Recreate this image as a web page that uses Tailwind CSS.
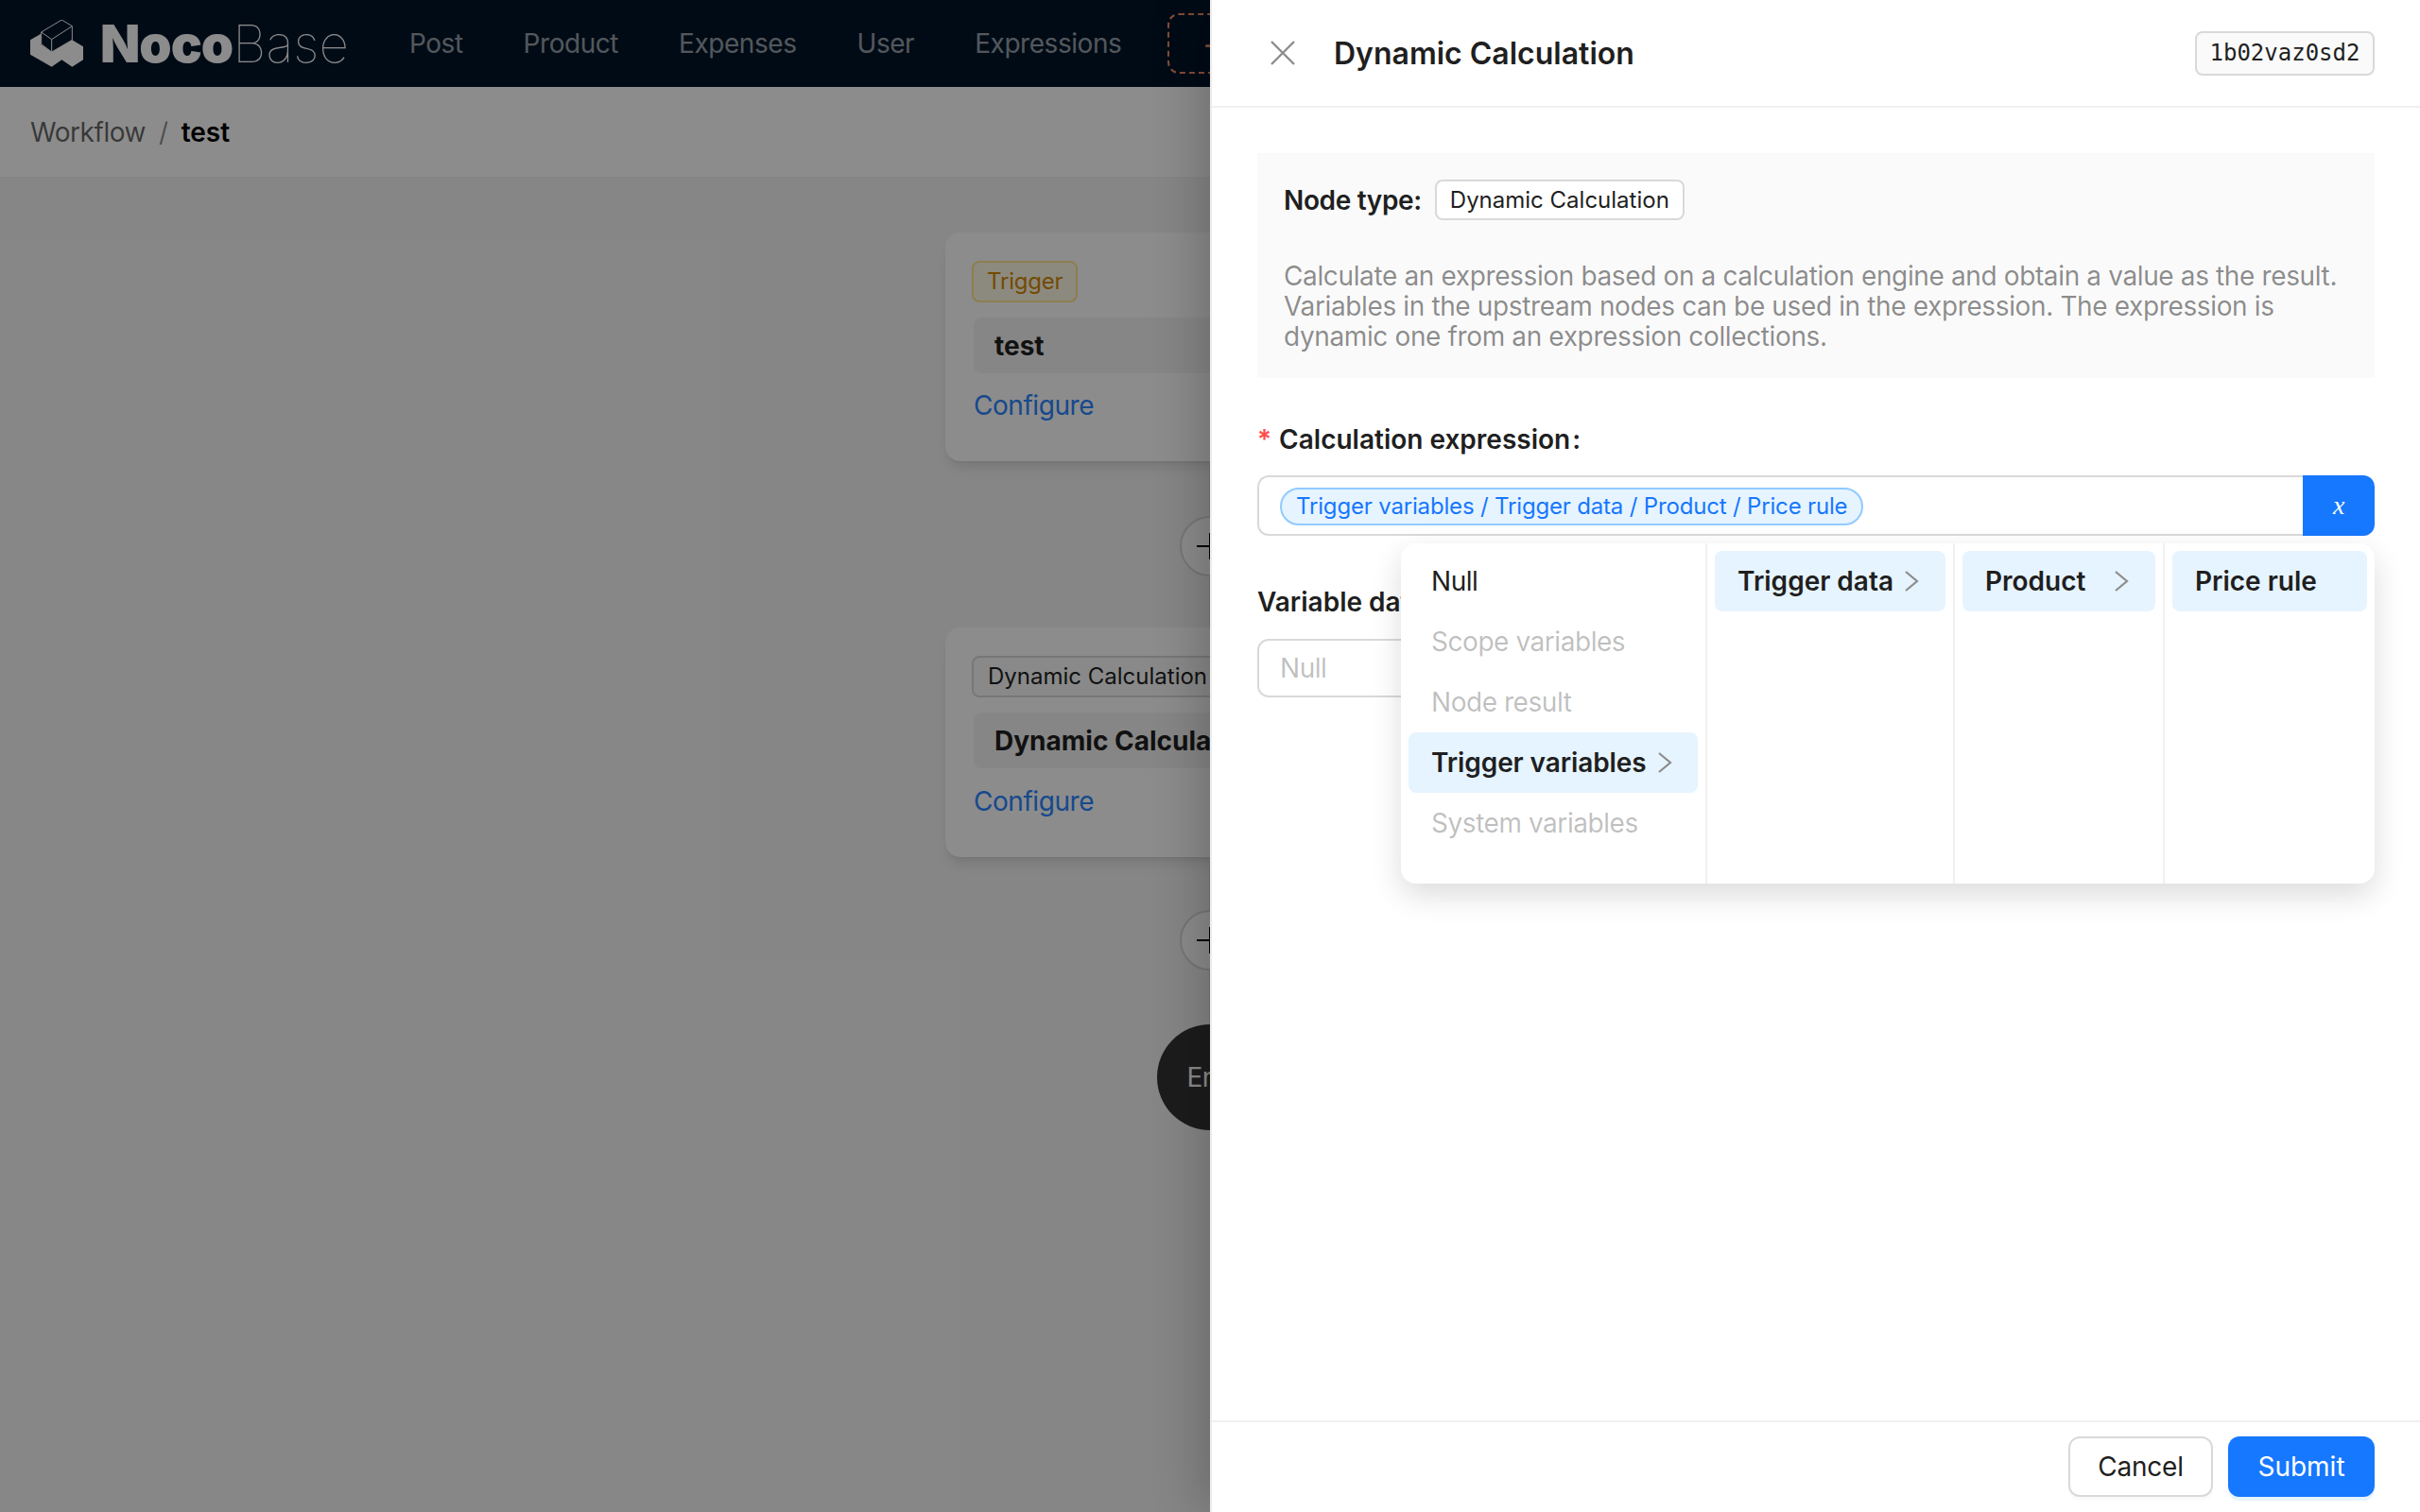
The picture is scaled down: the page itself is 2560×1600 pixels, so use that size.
<!DOCTYPE html>
<html lang="en">
<head>
    <meta charset="UTF-8">
    <title>Workflow - Dynamic Calculation</title>
    <script src="https://cdn.jsdelivr.net/npm/@tailwindcss/browser@4"></script>
</head>
<body class="font-['Inter',sans-serif] text-[28px] tracking-[-0.45px] text-[#1f1f1f]">
<div class="relative w-[2560px] h-[1600px] overflow-hidden bg-[#f5f5f5]">

    <!-- page under the drawer -->
    <header class="h-[92px] bg-[#001529] flex items-center pl-8">
        <svg class="w-[56px] h-[50px] shrink-0" viewBox="37 33 168 150">
            <path fill="#fff" d="M37 97 L71 77 V111 L105 135 L170 97 L205 118 V160 L170 182 L137 160 L105 182 L37 143 Z"/>
            <path fill="none" stroke="#fff" stroke-width="3" d="M72 72 L137 33 L170 53 V97 L105 135 L72 110 Z M72 72 L105 95 L170 53 M105 95 V135"/>
        </svg>
        <span class="ml-[18px] text-[55px] leading-none font-black text-white tracking-[-1px]">Noco</span>
        <span class="text-[55px] leading-none font-thin text-white tracking-normal">Base</span>
        <nav class="flex items-center ml-[32px] text-white/60">
            <a class="px-8">Post</a>
            <a class="px-8">Product</a>
            <a class="px-8">Expenses</a>
            <a class="px-8">User</a>
            <a class="px-8">Expressions</a>
        </nav>
        <button class="ml-[17px] w-[96px] h-[64px] border-2 border-dashed border-[#f18b62] rounded-xl text-[#f18b62] text-[36px] leading-none">+</button>
    </header>
    <div class="h-[96px] bg-white border-b border-[#f0f0f0] flex items-center px-8 gap-[14px]">
        <span class="text-black/60">Workflow</span>
        <span class="text-black/45">/</span>
        <span class="font-semibold text-black tracking-normal">test</span>
    </div>

    <main class="flex flex-col items-center pt-[58px]">
        <section class="w-[560px] h-[242px] bg-white rounded-2xl shadow-lg pt-[29px] px-7">
            <span class="inline-flex items-center h-[44px] px-[14px] text-[24px] tracking-[-0.2px] bg-[#fffbe6] border-2 border-[#ffe58f] text-[#d48806] rounded-lg">Trigger</span>
            <div class="mt-4 ml-[2px] h-[59px] bg-[#f5f5f5] rounded-lg flex items-center px-[22px] font-bold tracking-normal">test</div>
            <a class="block mt-[17px] ml-[2px] text-[#2a85ff] leading-[34px]">Configure</a>
        </section>
        <div class="relative w-[2px] h-[176px] bg-[#d9d9d9]">
            <span class="absolute left-[-31px] top-[58px] w-[64px] h-[64px] rounded-full bg-white border-2 border-[#d9d9d9] flex items-center justify-center">
                <svg class="w-[30px] h-[30px]" viewBox="0 0 30 30" stroke="#000" stroke-width="2"><path d="M1 15 H29 M15 1 V29"/></svg>
            </span>
        </div>
        <section class="w-[560px] h-[243px] bg-white rounded-2xl shadow-lg pt-[29px] px-7">
            <span class="inline-flex items-center h-[44px] px-[15px] text-[24px] tracking-normal bg-[#fafafa] border-2 border-[#d9d9d9] rounded-lg whitespace-nowrap">Dynamic Calculation</span>
            <div class="mt-4 ml-[2px] h-[59px] bg-[#f5f5f5] rounded-lg flex items-center px-[22px] font-bold tracking-normal whitespace-nowrap">Dynamic Calculation</div>
            <a class="block mt-[18px] ml-[2px] text-[#2a85ff] leading-[34px]">Configure</a>
        </section>
        <div class="relative w-[2px] h-[177px] bg-[#d9d9d9]">
            <span class="absolute left-[-31px] top-[56px] w-[64px] h-[64px] rounded-full bg-white border-2 border-[#d9d9d9] flex items-center justify-center">
                <svg class="w-[30px] h-[30px]" viewBox="0 0 30 30" stroke="#000" stroke-width="2"><path d="M1 15 H29 M15 1 V29"/></svg>
            </span>
        </div>
        <div class="w-[112px] h-[112px] rounded-full bg-[#333] text-white flex items-center justify-center">End</div>
    </main>

    <!-- mask -->
    <div class="absolute inset-0 bg-black/45"></div>

    <!-- drawer -->
    <aside class="absolute top-0 right-0 bottom-0 w-[1280px] bg-white border-l-2 border-[#ececec] shadow-[-12px_0_48px_rgba(0,0,0,0.2)] flex flex-col">
        <div class="h-[114px] border-b-2 border-[#f0f0f0] flex items-center pl-[60px] pr-[48px] shrink-0">
            <svg class="w-[30px] h-[30px] mr-[39px]" viewBox="0 0 30 30" fill="none" stroke="#8c8c8c" stroke-width="2.4"><path d="M3 3 L27 27 M27 3 L3 27"/></svg>
            <h1 class="text-[32px] font-semibold tracking-normal pt-[2px]">Dynamic Calculation</h1>
            <span class="ml-auto h-[47px] w-[190px] flex items-center justify-center bg-[#fafafa] border-2 border-[#d9d9d9] rounded-lg font-['DejaVu_Sans_Mono',monospace] text-[24px] tracking-normal">1b02vaz0sd2</span>
        </div>

        <div class="flex-1 relative pt-[48px] pl-[48px] pr-[48px]">
            <div class="h-[238px] bg-[#fafafa] pt-7 px-7">
                <div class="flex items-center gap-[14px]">
                    <span class="font-semibold tracking-[-0.35px]">Node type:</span>
                    <span class="h-[43px] px-[14px] flex items-center text-[24px] tracking-normal bg-white border-2 border-[#d9d9d9] rounded-lg">Dynamic Calculation</span>
                </div>
                <p class="mt-[43px] leading-[32px] tracking-[-0.37px] text-black/45">Calculate an expression based on a calculation engine and obtain a value as the result. Variables in the upstream nodes can be used in the expression. The expression is dynamic one from an expression collections.</p>
            </div>

            <label class="block mt-[48px] font-semibold tracking-normal leading-[34px]"><span class="text-[#ff4d4f] mr-2">*</span>Calculation expression<span class="ml-[2px]">:</span></label>
            <div class="mt-[21px] flex h-[64px]">
                <div class="flex-1 flex items-center border-2 border-r-0 border-[#d9d9d9] rounded-l-xl px-[22px]">
                    <span class="h-[40px] mt-[2px] flex items-center px-[15px] text-[24px] tracking-[-0.17px] text-[#1677ff] bg-[#e6f4ff] border-2 border-[#91caff] rounded-full whitespace-nowrap">Trigger variables / Trigger data / Product / Price rule</span>
                </div>
                <button class="w-[76px] bg-[#1677ff] text-white rounded-r-xl font-['Liberation_Serif',serif] italic text-[28px]">x</button>
            </div>

            <label class="block mt-[53px] font-semibold tracking-normal leading-[34px]">Variable datatype</label>
            <div class="mt-[22px] h-[62px] w-[400px] flex items-center border-2 border-[#d9d9d9] rounded-xl px-[22px] text-black/25">Null</div>

            <!-- cascader popup -->
            <div class="absolute left-[200px] top-[461px] w-[1030px] h-[360px] bg-white rounded-2xl shadow-[0_12px_32px_rgba(0,0,0,0.14)] flex">
                <ul class="w-[324px] p-2 border-r-2 border-[#f0f0f0]">
                    <li class="h-[64px] flex items-center px-6">Null</li>
                    <li class="h-[64px] flex items-center px-6 text-black/25">Scope variables</li>
                    <li class="h-[64px] flex items-center px-6 text-black/25">Node result</li>
                    <li class="h-[64px] flex items-center justify-between pl-6 pr-[27px] font-semibold tracking-[-0.1px] bg-[#e6f4ff] rounded-lg">Trigger variables
                        <svg class="w-[16px] h-[24px]" viewBox="0 0 16 24" fill="none" stroke="#8c8c8c" stroke-width="2.2"><path d="M2 2 L14 12 L2 22"/></svg>
                    </li>
                    <li class="h-[64px] flex items-center px-6 text-black/25">System variables</li>
                </ul>
                <ul class="w-[262px] p-2 border-r-2 border-[#f0f0f0]">
                    <li class="h-[64px] flex items-center justify-between pl-6 pr-[28px] font-semibold tracking-normal bg-[#e6f4ff] rounded-lg">Trigger data
                        <svg class="w-[16px] h-[24px]" viewBox="0 0 16 24" fill="none" stroke="#8c8c8c" stroke-width="2.2"><path d="M2 2 L14 12 L2 22"/></svg>
                    </li>
                </ul>
                <ul class="w-[222px] p-2 border-r-2 border-[#f0f0f0]">
                    <li class="h-[64px] flex items-center justify-between pl-6 pr-[28px] font-semibold tracking-normal bg-[#e6f4ff] rounded-lg">Product
                        <svg class="w-[16px] h-[24px]" viewBox="0 0 16 24" fill="none" stroke="#8c8c8c" stroke-width="2.2"><path d="M2 2 L14 12 L2 22"/></svg>
                    </li>
                </ul>
                <ul class="flex-1 p-2">
                    <li class="h-[64px] flex items-center px-6 font-semibold tracking-normal bg-[#e6f4ff] rounded-lg">Price rule</li>
                </ul>
            </div>
        </div>

        <div class="h-[97px] border-t-2 border-[#f0f0f0] flex items-start justify-end gap-4 pt-[15px] pr-[48px] shrink-0">
            <button class="w-[153px] h-[64px] bg-white border-2 border-[#d9d9d9] rounded-xl tracking-[-0.2px] shadow-[0_4px_0_rgba(0,0,0,0.02)]">Cancel</button>
            <button class="w-[155px] h-[64px] bg-[#1677ff] text-white rounded-xl tracking-normal shadow-[0_4px_0_rgba(5,145,255,0.1)]">Submit</button>
        </div>
    </aside>
</div>
</body>
</html>
